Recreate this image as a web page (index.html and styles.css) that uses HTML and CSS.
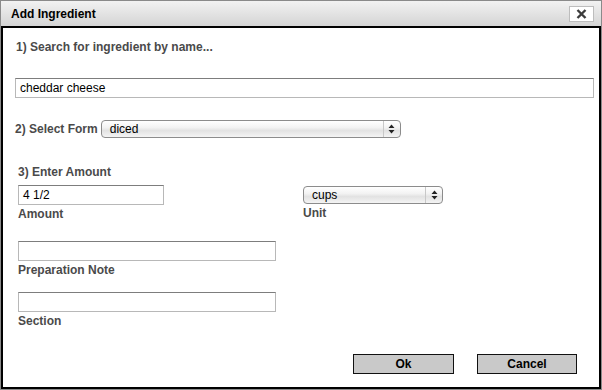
FILE: index.html
```html
<!DOCTYPE html>
<html>
<head>
<meta charset="utf-8">
<link rel="stylesheet" href="styles.css">
</head>
<body>
<div class="dialog">
  <div class="titlebar">
    <span class="title">Add Ingredient</span>
    <span class="close"><svg width="11" height="10" viewBox="0 0 11 10"><path d="M1.5 1 L9.5 9 M9.5 1 L1.5 9" stroke="#3c3c3c" stroke-width="2.4" stroke-linecap="butt"/></svg></span>
  </div>
  <div class="content">
    <div class="label step1">1) Search for ingredient by name...</div>
    <div class="input search">cheddar cheese</div>
    <div class="row form-row">
      <span class="label">2) Select Form</span>
      <div class="select form-select"><span class="sel-text">diced</span><span class="sel-arrows"><svg width="7" height="10" viewBox="0 0 7 10"><path d="M3.5 0.5 L6.5 4 L0.5 4 Z M0.5 6 L6.5 6 L3.5 9.5 Z" fill="#222"/></svg></span></div>
    </div>
    <div class="step3">
      <div class="label step3-title">3) Enter Amount</div>
      <div class="amount-grid">
        <div class="field">
          <div class="input amount">4 1/2</div>
          <div class="label sub">Amount</div>
        </div>
        <div class="field unit-field">
          <div class="select unit-select"><span class="sel-text">cups</span><span class="sel-arrows"><svg width="7" height="10" viewBox="0 0 7 10"><path d="M3.5 0.5 L6.5 4 L0.5 4 Z M0.5 6 L6.5 6 L3.5 9.5 Z" fill="#222"/></svg></span></div>
          <div class="label sub">Unit</div>
        </div>
      </div>
      <div class="field wide-field">
        <div class="input wide"></div>
        <div class="label sub">Preparation Note</div>
      </div>
      <div class="field wide-field">
        <div class="input wide"></div>
        <div class="label sub">Section</div>
      </div>
    </div>
    <div class="buttons">
      <div class="btn ok">Ok</div>
      <div class="btn cancel">Cancel</div>
    </div>
  </div>
</div>
</body>
</html>
```
FILE: styles.css
```css
* { box-sizing: border-box; }
html, body { margin: 0; padding: 0; background: #fff; }
body { font-family: "Liberation Sans", Arial, sans-serif; font-size: 12px; }
.dialog {
  width: 602px; height: 390px;
  border: 1px solid #8a8a8a;
  display: flex; flex-direction: column;
  background: #fff;
}
.titlebar {
  height: 25px; flex: none;
  background: linear-gradient(#f2f2f2, #d4d4d4);
  display: flex; align-items: center; justify-content: space-between;
  padding: 0 6px 0 10px;
}
.title { font-weight: bold; font-size: 12px; color: #000; padding-top: 1px; }
.close {
  width: 25px; height: 16px;
  background: #fff; border: 1px solid #bdbdbd;
  display: flex; align-items: center; justify-content: center;
  margin-right: 1px;
}
.content {
  flex: 1;
  border: 2px solid #000;
  padding: 12px 5px 0 12px;
  display: flex; flex-direction: column;
}
.label { font-weight: bold; color: #4a4a4a; line-height: 14px; }
.step1 { padding-left: 1px; }
.input {
  height: 20px;
  border: 1px solid #b8b8b8; border-top-color: #7d7d7d;
  font-size: 12px; line-height: 18px; padding-left: 4px; color: #000;
  background: #fff;
}
.search { margin-top: 24px; width: 579px; }
.form-row { display: flex; align-items: center; margin-top: 22px; height: 18px; }
.select {
  height: 18px;
  border: 1px solid #8c8c8c; border-radius: 4px;
  background: linear-gradient(#ffffff 0%, #f3f3f3 40%, #e2e2e2 60%, #f4f4f4 100%);
  display: flex; align-items: center; justify-content: space-between;
  font-size: 12px; color: #000;
}
.sel-text { padding-left: 8px; line-height: 16px; }
.sel-arrows {
  width: 17px; height: 16px; border-left: 1px solid #c8c8c8;
  display: flex; align-items: center; justify-content: center;
}
.form-select { width: 300px; margin-left: 3px; }
.step3 { padding-left: 3px; margin-top: 27px; }
.amount-grid { display: grid; grid-template-columns: 285px 140px; margin-top: 6px; }
.amount { width: 146px; }
.unit-select { width: 140px; margin-top: 1px; margin-bottom: 1px; }
.unit-field .sub { margin-top: 2px; }
.sub { margin-top: 2px; }
.wide-field { margin-top: 20px; }
.wide-field + .wide-field { margin-top: 15px; }
.wide { width: 258px; }
.buttons { display: flex; justify-content: flex-end; gap: 23px; margin-top: 26px; padding-right: 17px; }
.btn {
  height: 20px; background: #c9c9c9; border: 1px solid #111;
  font-weight: bold; font-size: 12px; text-align: center; line-height: 18px; color: #000;
}
.ok { width: 101px; }
.cancel { width: 100px; }
```
